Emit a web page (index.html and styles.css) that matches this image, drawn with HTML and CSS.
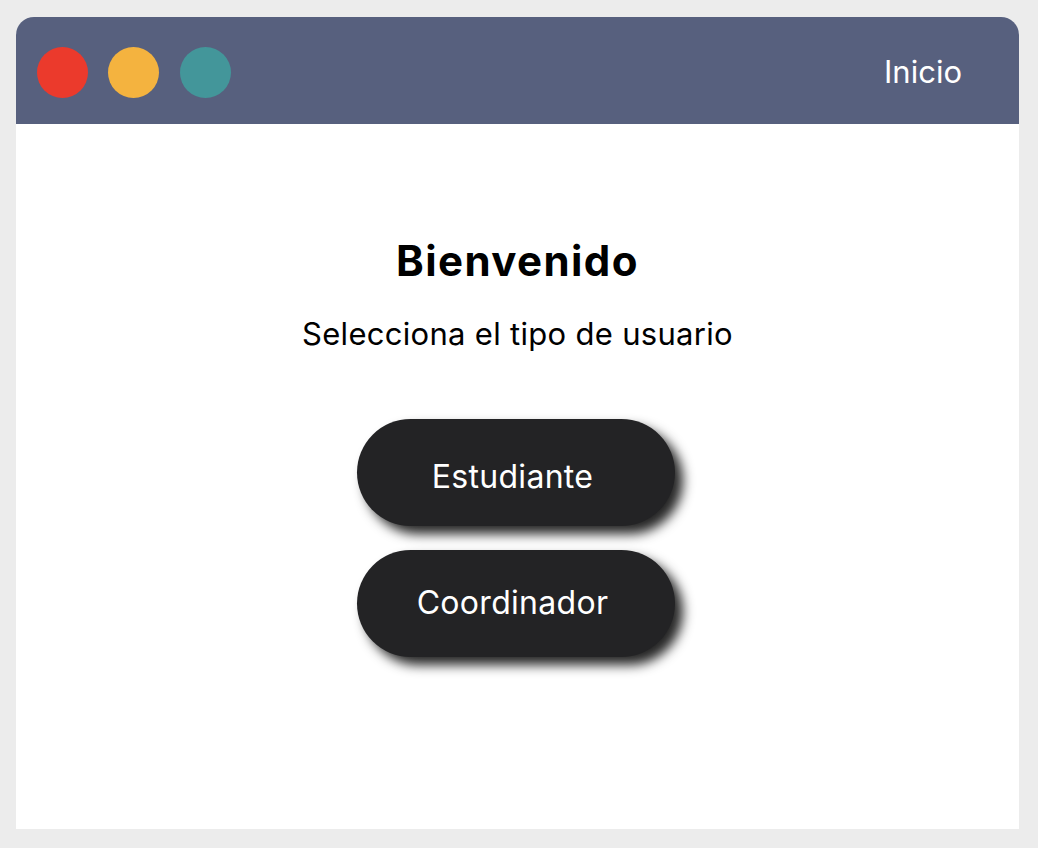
FILE: index.html
```html
<!DOCTYPE html>
<html lang="es">
<head>
<meta charset="utf-8">
<title>Inicio</title>
<link rel="stylesheet" href="styles.css">
</head>
<body>
<div class="window">
  <header class="titlebar">
    <div class="dots">
      <span class="dot red"></span>
      <span class="dot yellow"></span>
      <span class="dot teal"></span>
    </div>
    <span class="title">Inicio</span>
  </header>
  <main class="content">
    <h1 class="heading">Bienvenido</h1>
    <p class="subtitle">Selecciona el tipo de usuario</p>
    <div class="actions">
      <button class="pill pill-low">Estudiante</button>
      <button class="pill">Coordinador</button>
    </div>
  </main>
</div>
</body>
</html>
```
FILE: styles.css
```css
html, body {
  margin: 0;
  padding: 0;
}
body {
  background: #ececec;
  padding: 17px 19px 19px 16px;
  font-family: "Inter", "Noto Sans", sans-serif;
}
.window {
  width: 1003px;
  height: 812px;
  background: #ffffff;
  border-radius: 18px 18px 0 0;
  overflow: hidden;
  display: flex;
  flex-direction: column;
}
.titlebar {
  height: 107px;
  flex: none;
  background: #57607e;
  display: flex;
  align-items: center;
  justify-content: space-between;
  padding: 0 57px 0 21px;
}
.dots {
  display: flex;
  gap: 20.4px;
  padding-top: 4px;
}
.dot {
  width: 51px;
  height: 51px;
  border-radius: 50%;
  display: block;
}
.red { background: #eb3a2c; }
.yellow { background: #f4b33f; }
.teal { background: #43969a; }
.title {
  color: #ffffff;
  font-size: 31px;
  line-height: 1.2;
  font-weight: 400;
  padding-top: 2px;
}
.content {
  display: flex;
  flex-direction: column;
  align-items: center;
  padding-top: 112px;
}
.heading {
  margin: 0;
  font-size: 42px;
  line-height: 1.2;
  font-weight: 700;
  letter-spacing: 1.4px;
  color: #000;
}
.subtitle {
  margin: 29px 0 0;
  font-size: 31px;
  line-height: 1.2;
  letter-spacing: 0.3px;
  color: #000;
}
.actions {
  display: flex;
  flex-direction: column;
  gap: 24px;
  margin-top: 66px;
  margin-left: -3px;
}
.pill {
  width: 318px;
  height: 107px;
  border: none;
  border-radius: 54px;
  padding: 0 7px 0 0;
  background: #232325;
  color: #ffffff;
  font-family: inherit;
  font-size: 32px;
  line-height: 1.2;
  letter-spacing: 0.3px;
  box-shadow: 8px 8px 12px rgba(0, 0, 0, 0.85);
}
.pill-low {
  padding-top: 10px;
}
```
